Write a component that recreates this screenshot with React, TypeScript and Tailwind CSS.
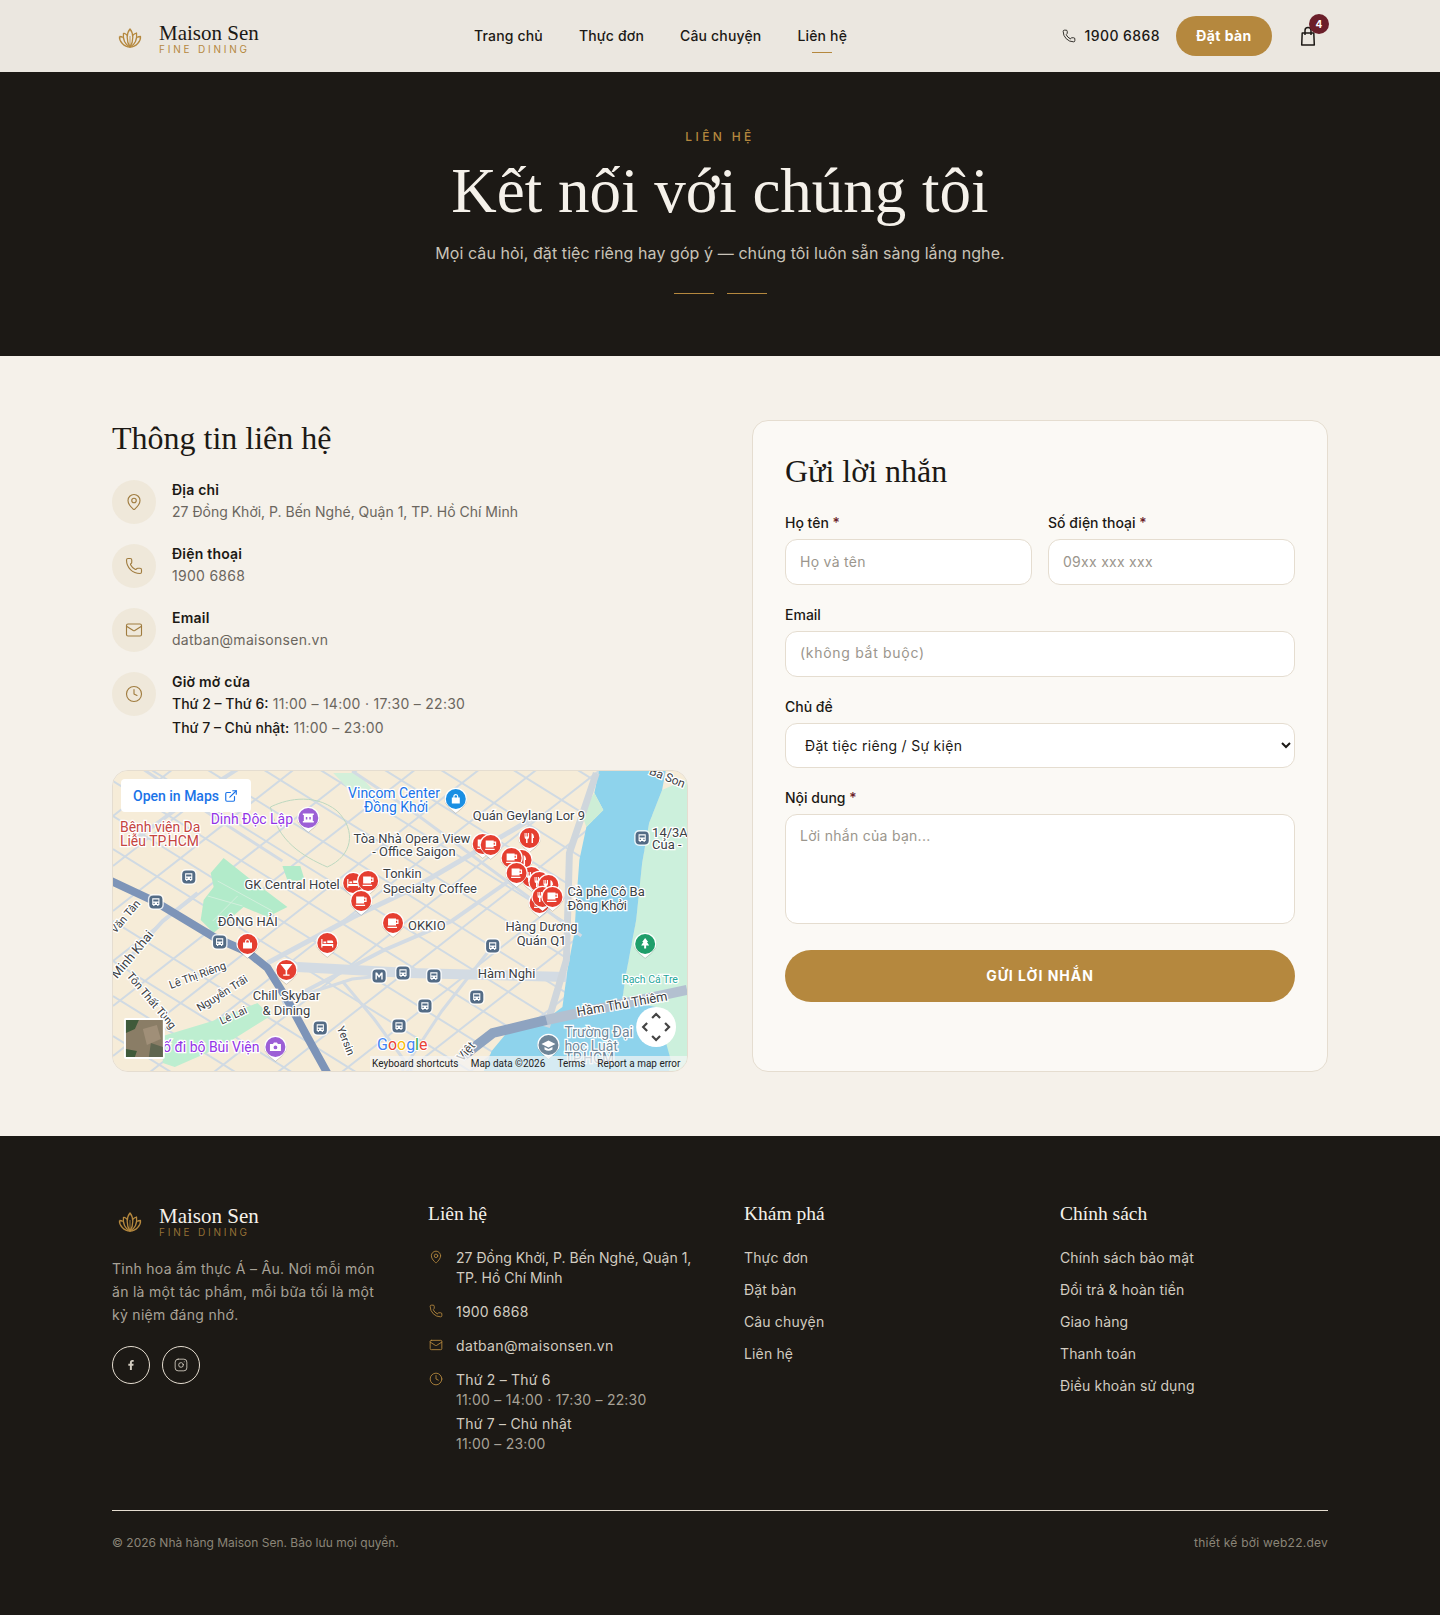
import { Clock, ExternalLink, Instagram, Mail, MapPin, Phone } from "lucide-react"
import { FaFacebookF } from "react-icons/fa"

const SANS = "font-['Inter',sans-serif]"
const SERIF = "font-['Liberation_Serif',serif]"

function Lotus({ className }: { className?: string }) {
  return (
    <svg viewBox="0 0 24 20" fill="none" stroke="#b5883e" strokeWidth="1.3" strokeLinejoin="round" className={className}>
      <path d="M12 1C8.5 5 8 13 12 19C16 13 15.5 5 12 1Z" />
      <path d="M5.5 5C4.5 11 7 17 12 19C17 17 19.5 11 18.5 5C16.8 5.6 15.6 6.4 14.7 7.4M5.5 5C7.2 5.6 8.4 6.4 9.3 7.4" />
      <path d="M1.5 8.5C1 13 6 19 12 19C18 19 23 13 22.5 8.5C21 8.6 20 8.9 19.2 9.3M1.5 8.5C3 8.6 4 8.9 4.8 9.3" />
      <path d="M12 8V19" strokeWidth="0.8" />
    </svg>
  )
}

function Logo({ dark }: { dark?: boolean }) {
  return (
    <div className="flex items-center gap-[11px]">
      <div className="w-9 flex justify-center">
        <Lotus className="w-6 h-5 mt-1" />
      </div>
      <div className="flex flex-col pt-1">
        <span className={`${SERIF} text-[21px] leading-6 ${dark ? "text-[#f5f1ea]" : "text-[#1c1915]"}`}>Maison Sen</span>
        <span className={`text-[10px] leading-[14px] -mt-[3px] tracking-[0.28em] ${dark ? "text-[#b5883e]/80" : "text-[#b5883e]"}`}>FINE DINING</span>
      </div>
    </div>
  )
}

const NAV = ["Trang chủ", "Thực đơn", "Câu chuyện", "Liên hệ"]

function Header() {
  return (
    <header className="bg-[#ebe7e0] h-[72px] flex items-center justify-between px-[112px] relative">
      <Logo />
      <nav className="flex items-center gap-9 absolute left-[474px] top-0 h-[72px]">
        {NAV.map((n, i) => (
          <a key={n} className="relative text-sm font-medium text-[#1c1915] tracking-[0.012em]">
            {n}
            {i === 3 && <span className="absolute left-1/2 -translate-x-1/2 top-[26px] w-5 h-px bg-[#b5883e]" />}
          </a>
        ))}
      </nav>
      <div className="flex items-center">
        <Phone className="w-[14px] h-[14px] text-[#1c1915] mr-[9px]" strokeWidth={1.5} />
        <span className="text-sm font-medium text-[#1c1915] tracking-[0.03em] mr-4">1900 6868</span>
        <button className="h-10 w-[96px] rounded-full bg-[#b5883e] text-white text-sm font-bold tracking-[0.03em] mr-4">Đặt bàn</button>
        <button className="relative w-10 h-10 flex items-center justify-center text-[#1c1915]">
          <svg viewBox="0 0 20 20" className="w-5 h-5" fill="none" stroke="currentColor" strokeWidth="1.5" strokeLinejoin="round">
            <path d="M4.2 7H15.8L16.3 19H3.7Z" />
            <path d="M7 9V4.5a3 3 0 0 1 6 0V9" />
          </svg>
          <span className="absolute -top-[2px] -right-px w-5 h-5 rounded-full bg-[#6b1f2a] text-white text-[10px] font-bold flex items-center justify-center">4</span>
        </button>
      </div>
    </header>
  )
}

function Hero() {
  return (
    <section className="bg-[#1c1915] h-[284px] flex flex-col items-center pt-[57px]">
      <div className="text-xs font-medium leading-4 tracking-[0.28em] text-[#b5883e]">LIÊN HỆ</div>
      <h1 className={`${SERIF} text-[63px] leading-[72px] mt-[10px] text-[#f5f1ea]`}>Kết nối với chúng tôi</h1>
      <p className="text-base leading-6 mt-[14px] text-[#c9c3b8] tracking-[0.005em]">Mọi câu hỏi, đặt tiệc riêng hay góp ý — chúng tôi luôn sẵn sàng lắng nghe.</p>
      <div className="flex gap-[13px] mt-[28px]">
        <span className="w-10 h-px bg-[#b5883e]" />
        <span className="w-10 h-px bg-[#b5883e]" />
      </div>
    </section>
  )
}

function InfoRow({ icon, title, children }: { icon: React.ReactNode; title: string; children: React.ReactNode }) {
  return (
    <div className="flex gap-4">
      <div className="w-11 h-11 rounded-full bg-[#efe8da] text-[#a07c3f] flex items-center justify-center shrink-0">{icon}</div>
      <div className="text-sm leading-[22px] -mt-px">
        <div className="font-semibold tracking-[0.015em] text-[#1c1915]">{title}</div>
        {children}
      </div>
    </div>
  )
}

// -- map drawing -----------------------------------------------------------

const GRID_A = [-290, -250, -205, -170, -130, -95, -60, -25, 10, 45, 78, 150, 190, 225, 265]
const GRID_B = [45, 95, 140, 190, 235, 285, 330, 380, 430, 480, 530, 580, 625, 680, 730]

const MAIN_ROADS: [string, number][] = [
  ["M155 192L241 146L300 118L420 48", 5],
  ["M170 232L270 180L340 150L400 108", 4],
  ["M185 196L298 202L455 206", 10],
  ["M240 0L300 40L470 165", 3],
  ["M0 205L50 150L85 122", 4],
  ["M20 70L75 30L130 -5", 4],
  ["M30 -2L100 45L170 90", 3],
  ["M175 229L240 208L298 202", 3],
  ["M290 300L330 240L381 175", 3],
  ["M230 210L262 248L300 300", 3],
]

const STREET_LABELS: [string, number, number, number, number][] = [
  ["Lê Thị Riêng", 85, 205, -20, 11],
  ["Nguyễn Trãi", 110, 223, -32, 11],
  ["Lê Lai", 121, 245, -25, 11],
  ["Minh Khai", 20, 184, -50, 13],
  ["Tôn Thất Tùng", 38, 230, 50, 11],
  ["Văn Tân", 13, 146, -50, 11],
  ["Yersin", 233, 270, 68, 11],
  ["Ba Son", 556, 7, 22, 12],
  ["Hầm Thủ Thiêm", 511, 234, -10, 13],
  ["Việt", 355, 281, -50, 12],
]

const LABELS: [string, number, number, string, "start" | "middle" | "end", number?][] = [
  ["Vincom Center", 282, 27, "#1a73e8", "middle"],
  ["Đồng Khởi", 284, 41, "#1a73e8", "middle"],
  ["Dinh Độc Lập", 98, 53, "#9334e6", "start"],
  ["Bệnh viện Da", 7, 61, "#c5453f", "start"],
  ["Liễu TP.HCM", 7, 75, "#c5453f", "start"],
  ["Tòa Nhà Opera View", 300, 72, "#3c4043", "middle", 13],
  ["- Office Saigon", 302, 85, "#3c4043", "middle", 13],
  ["Quán Geylang Lor 9", 361, 49, "#3c4043", "start", 13],
  ["GK Central Hotel", 132, 118, "#3c4043", "start", 13],
  ["Tonkin", 271, 107, "#3c4043", "start", 13],
  ["Specialty Coffee", 271, 122, "#3c4043", "start", 13],
  ["Cà phê Cô Ba", 456, 125, "#3c4043", "start", 13],
  ["Đồng Khởi", 456, 139, "#3c4043", "start", 13],
  ["OKKIO", 296, 159, "#3c4043", "start", 13],
  ["ĐÔNG HẢI", 105, 155, "#3c4043", "start", 13],
  ["Hàng Dương", 430, 160, "#3c4043", "middle", 13],
  ["Quán Q1", 430, 174, "#3c4043", "middle", 13],
  ["Hàm Nghi", 366, 207, "#3c4043", "start", 13],
  ["Chill Skybar", 174, 229, "#3c4043", "middle", 13],
  ["& Dining", 174, 244, "#3c4043", "middle", 13],
  ["Phố đi bộ Bùi Viện", 147, 281, "#9334e6", "end"],
  ["14/3A", 541, 66, "#3c4043", "start", 13],
  ["Của -", 541, 78, "#3c4043", "start", 13],
  ["Rạch Cá Tre", 511, 212, "#26a69a", "start", 10.5],
  ["Trường Đại", 453, 266, "#70889a", "start"],
  ["học Luật", 453, 280, "#70889a", "start"],
  ["TP.HCM", 453, 292, "#70889a", "start"],
]

type Glyph = "cup" | "fork" | "bed" | "bag" | "glass" | "lock" | "tree" | "bank" | "camera" | "cap"

function PinGlyph({ g }: { g: Glyph }) {
  if (g === "cup") return <path d="M-5 -4.5H3V-3.5H5.5V1H3V2.5H-5ZM3 -2.2V-.3H4.2V-2.2ZM-5.5 3.7H4V5H-5.5Z" fill="#fff" fillRule="evenodd" />
  if (g === "fork") return <path d="M-5 -5V-1Q-5 1 -3.5 1V5H-2V1Q-.5 1 -.5 -1V-5H-1.5V-1.5H-2.3V-5H-3.2V-1.5H-4V-5ZM2 -5Q4.5 -4 4.5 0H3.5V5H2Z" fill="#fff" />
  if (g === "bed") return <path d="M-6 -4H-4.8V1H6V4.5H4.8V3H-4.8V4.5H-6ZM-3.8 -1.5H-1V.2H-3.8ZM0 -2.5H5Q6 -2.5 6 0H0Z" fill="#fff" />
  if (g === "bag") return <path d="M-4.5 -1.5H-2.5V-2.5Q-2.5 -5 0 -5Q2.5 -5 2.5 -2.5V-1.5H4.5V4.5H-4.5ZM-1.3 -1.5H1.3V-2.5Q1.3 -3.8 0 -3.8Q-1.3 -3.8 -1.3 -2.5Z" fill="#fff" />
  if (g === "glass") return <path d="M-6 -6H6L.8 .5V4.4H3.2V5.8H-3.2V4.4H-.8V.5Z" fill="#fff" />
  if (g === "lock") return <path d="M-4 -1.5H-2.5V-2.5Q-2.5 -5 0 -5Q2.5 -5 2.5 -2.5V-1.5H4V4.5H-4ZM-1.3 -1.5H1.3V-2.5Q1.3 -3.8 0 -3.8Q-1.3 -3.8 -1.3 -2.5Z" fill="#fff" />
  if (g === "tree") return <path d="M0 -6L3 -2H1.8L4 1.5H1V4.5H-1V1.5H-4L-1.8 -2H-3Z" fill="#fff" />
  if (g === "bank") return <path d="M-5.5 -4.5H5.5V-3H4.5V3H5.5V4.5H-5.5V3H-4.5V-3H-5.5ZM-2.5 -1V1.5H-1V-1ZM1 -1V1.5H2.5V-1Z" fill="#fff" fillRule="evenodd" />
  if (g === "camera") return <path d="M-5.5 -3H-2.5L-1.5 -4.5H1.5L2.5 -3H5.5V4H-5.5ZM0 -1.5A1.9 1.9 0 1 0 0 2.3A1.9 1.9 0 1 0 0 -1.5Z" fill="#fff" fillRule="evenodd" />
  return <path d="M0 -4.5L7 -1L0 2.5L-7 -1ZM-4 2L0 4L4 2V4.5Q0 7 -4 4.5Z" fill="#fff" />
}

function Pin({ x, y, g, color = "#e53e30" }: { x: number; y: number; g: Glyph; color?: string }) {
  return (
    <g transform={`translate(${x} ${y})`}>
      <path d="M-10.6 3.5A11.2 11.2 0 1 1 10.6 3.5Q7 9 0 14Q-7 9 -10.6 3.5Z" fill="#000" opacity="0.18" transform="translate(0 .8)" />
      <path d="M-10.6 3.5A11.2 11.2 0 1 1 10.6 3.5Q7 9 0 14Q-7 9 -10.6 3.5Z" fill="#fff" />
      <circle r="10" fill={color} />
      <PinGlyph g={g} />
    </g>
  )
}

function Bus({ x, y, metro }: { x: number; y: number; metro?: boolean }) {
  return (
    <g transform={`translate(${x} ${y})`}>
      <rect x="-8" y="-8" width="16" height="16" rx="5" fill="#fff" opacity="0.8" />
      <rect x="-6.6" y="-6.6" width="13.2" height="13.2" rx="4" fill="#536b85" />
      {metro ? (
        <path d="M-3.6 3.6V-3.6H-2L0 -.4L2 -3.6H3.6V3.6H2.2V-1L0 2L-2.2 -1V3.6Z" fill="#fff" />
      ) : (
        <path d="M-3.6 -3.8H3.6V3H2.6V4H1.4V3H-1.4V4H-2.6V3H-3.6ZM-2.6 -2.6V-.4H2.6V-2.6ZM-2.4 .8V1.9H-1.2V.8ZM1.2 .8V1.9H2.4V.8Z" fill="#fff" fillRule="evenodd" />
      )}
    </g>
  )
}

const PINS: [number, number, Glyph, string?][] = [
  [196, 47, "bank", "#9c5fd6"],
  [344, 28, "lock", "#1a8fe3"],
  [163, 276, "camera", "#9c5fd6"],
  [534, 173, "tree", "#1e9e6a"],
  [437, 274, "cap", "#6f8598"],
  [241, 112, "bed"],
  [256, 110, "cup"],
  [249, 130, "cup"],
  [281, 152, "cup"],
  [215, 172, "bed"],
  [135, 173, "bag"],
  [174, 199, "glass"],
  [418, 67, "fork"],
  [371, 73, "cup"],
  [379, 74, "cup"],
  [410, 89, "fork"],
  [400, 87, "cup"],
  [420, 106, "fork"],
  [405, 102, "cup"],
  [428, 111, "fork"],
  [437, 114, "fork"],
  [428, 132, "cup"],
  [431, 126, "fork"],
  [441, 126, "cup"],
]

const BUSES: [number, number, boolean?][] = [
  [76, 106], [43, 131], [107, 171], [208, 257], [267, 205, true], [291, 202], [287, 255],
  [381, 175], [322, 205], [365, 226], [313, 235], [531, 67],
]

function MapDrawing() {
  return (
    <svg viewBox="0 0 576 300" preserveAspectRatio="none" className="block w-full h-full" fontFamily="Roboto, sans-serif">
      <rect width="576" height="300" fill="#f6ecd8" />
      <g stroke="#d0dae3" strokeWidth="2">
        {GRID_A.map((c) => <line key={c} x1={0} y1={c} x2={576} y2={c + 357} />)}
        {GRID_B.map((c) => <line key={c} x1={0} y1={c} x2={576} y2={c - 449} />)}
      </g>
      {/* parks */}
      <path d="M111 87L135 106L175 136L155 146L131 136L101 162L88 149L91 129L101 116L98 102Z" fill="#b2ebca" />
      <path d="M170 95L188 95L192 108L176 112Z" fill="#b2ebca" />
      <path d="M50 292L50 265L100 250L145 232L158 245L110 275L62 296Z" fill="#bdeed0" />
      <path d="M221 2L245 2L262 20L240 22Z" fill="#d3f0da" />
      <path d="M158 36C170 30 200 20 225 40C245 60 240 85 215 96C190 85 165 70 158 36Z" fill="none" stroke="#bdd8c0" strokeWidth="1" />
      <path d="M95 125L130 135M105 110L160 140M100 150L125 125" stroke="#d2efdc" strokeWidth="1" />
      {/* east bank and river */}
      <path d="M551 19L576 8V300H558L545 236L511 229L515 202L525 149L531 92L538 52Z" fill="#ccf0dc" />
      <path d="M488 -2L555 -2L551 19L538 52L531 92L525 149L515 202L511 229L545 236L560 290L558 300H372L380 280L395 262L435 248L451 236L456 199L463 162L465 129L468 89L475 56L492 39L483 22Z" fill="#8ed3ec" />
      <path d="M483 22L492 39L475 56L470 42Z" fill="#cdeed6" />
      {MAIN_ROADS.map(([d, w]) => (
        <path key={d} d={d} fill="none" stroke="#d3dbe3" strokeWidth={w} />
      ))}
      <path d="M485 2L458 82L455 189L435 256" fill="none" stroke="#cfd6dc" strokeWidth="7" />
      <path d="M435 249L576 219" fill="none" stroke="#b3c0d0" strokeWidth="10" />
      <path d="M350 286L381 262L435 249" fill="none" stroke="#8ea3c0" strokeWidth="10" />
      <path d="M-2 110L43 131L101 166L135 181L155 197L175 229L195 266L215 302" fill="none" stroke="#7d94b8" strokeWidth="8" />
      {/* street names */}
      <g fill="#3c4043" stroke="#fff" strokeWidth="2.5" paintOrder="stroke" textAnchor="middle">
        {STREET_LABELS.map(([t, x, y, r, s]) => (
          <text key={t} x={x} y={y} fontSize={s} transform={`rotate(${r} ${x} ${y})`} dominantBaseline="middle">{t}</text>
        ))}
      </g>
      {BUSES.map(([x, y, m]) => <Bus key={`${x}-${y}`} x={x} y={y} metro={m} />)}
      {PINS.map(([x, y, g, c]) => <Pin key={`${x}-${y}`} x={x} y={y} g={g} color={c} />)}
      {/* place names */}
      <g stroke="#fff" strokeWidth="2.5" paintOrder="stroke" fontSize="14">
        {LABELS.map(([t, x, y, c, a, s]) => (
          <text key={`${t}${x}`} x={x} y={y} fill={c} textAnchor={a} fontSize={s}>{t}</text>
        ))}
      </g>
      {/* satellite thumbnail */}
      <rect x="11" y="247" width="41" height="41" rx="2" fill="#fff" />
      <rect x="13" y="249" width="37" height="37" fill="#8a7d66" />
      <path d="M13 249H26L22 258L13 262ZM13 278L24 280L22 286H13Z" fill="#3f5a3a" />
      <path d="M30 258L44 254L48 268L34 274Z" fill="#a08f78" />
      <path d="M38 272L50 276V286H36Z" fill="#5f6650" />
      {/* google + attribution */}
      <text x="265" y="279" fontSize="16" stroke="#fff" strokeWidth="2" paintOrder="stroke">
        <tspan fill="#4285f4">G</tspan><tspan fill="#ea4335">o</tspan><tspan fill="#fbbc05">o</tspan><tspan fill="#4285f4">g</tspan><tspan fill="#34a853">l</tspan><tspan fill="#ea4335">e</tspan>
      </text>
      <rect x="258" y="285" width="318" height="15" fill="#f5f5f5" opacity="0.7" />
      <g fontSize="10" fill="#222">
        <text x="260" y="296">Keyboard shortcuts</text>
        <text x="359" y="296">Map data ©2026</text>
        <text x="446" y="296">Terms</text>
        <text x="486" y="296">Report a map error</text>
      </g>
      {/* camera control */}
      <circle cx="545" cy="256" r="20" fill="#fff" />
      <path d="M541 247L545 243L549 247M541 265L545 269L549 265M536 252L532 256L536 260M554 252L558 256L554 260" fill="none" stroke="#444" strokeWidth="2.2" />
    </svg>
  )
}

function MapCard() {
  return (
    <div className="relative mt-[31px] h-[302px] rounded-2xl overflow-hidden border border-[#e5ddd0]">
      <MapDrawing />
      <div className="absolute left-2 top-2 w-[130px] h-[33px] bg-white rounded-sm flex items-center gap-[5px] pl-3 font-['Roboto',sans-serif] text-sm font-medium text-[#1a73e8]">
        Open in Maps
        <ExternalLink className="w-[14px] h-[14px]" />
      </div>
    </div>
  )
}

function ContactInfo() {
  const ic = "w-[18px] h-[18px]"
  const val = "text-[#6b665e] tracking-[0.02em]"
  const day = "font-medium text-[#1c1915] tracking-normal"
  return (
    <div>
      <h2 className={`${SERIF} text-[32px] leading-9 text-[#1c1915] mb-6`}>Thông tin liên hệ</h2>
      <div className="flex flex-col gap-5">
        <InfoRow icon={<MapPin className={ic} strokeWidth={1.5} />} title="Địa chỉ">
          <div className="text-[#6b665e]">27 Đồng Khởi, P. Bến Nghé, Quận 1, TP. Hồ Chí Minh</div>
        </InfoRow>
        <InfoRow icon={<Phone className={ic} strokeWidth={1.5} />} title="Điện thoại">
          <div className={val}>1900 6868</div>
        </InfoRow>
        <InfoRow icon={<Mail className={ic} strokeWidth={1.5} />} title="Email">
          <div className={val}>datban@maisonsen.vn</div>
        </InfoRow>
        <InfoRow icon={<Clock className={ic} strokeWidth={1.5} />} title="Giờ mở cửa">
          <div className={val}><span className={day}>Thứ 2 – Thứ 6:</span> 11:00 – 14:00 · 17:30 – 22:30</div>
          <div className={`${val} mt-[2px]`}><span className={day}>Thứ 7 – Chủ nhật:</span> 11:00 – 23:00</div>
        </InfoRow>
      </div>
      <MapCard />
    </div>
  )
}

const FIELD = "w-full bg-white border border-[#e5ddd0] rounded-xl text-sm text-[#1c1915] placeholder:text-[#9b968d] outline-none tracking-[0.02em]"

function Label({ text, required }: { text: string; required?: boolean }) {
  return (
    <label className="block text-sm font-medium leading-5 text-[#1c1915] mb-[6px]">
      {text}
      {required && <span className="text-[#6b1f2a]"> *</span>}
    </label>
  )
}

function ContactForm() {
  return (
    <div className="bg-[#fbf9f5] border border-[#e5ddd0] rounded-2xl p-8 h-[652px]">
      <h2 className={`${SERIF} text-[32px] leading-9 text-[#1c1915] mb-6`}>Gửi lời nhắn</h2>
      <div className="grid grid-cols-2 gap-4">
        <div>
          <Label text="Họ tên" required />
          <input className={`${FIELD} h-[46px] px-[14px] pb-[2px]`} placeholder="Họ và tên" />
        </div>
        <div>
          <Label text="Số điện thoại" required />
          <input className={`${FIELD} h-[46px] px-[14px] pb-[2px]`} placeholder="09xx xxx xxx" />
        </div>
      </div>
      <div className="mt-5">
        <Label text="Email" />
        <input className={`${FIELD} h-[46px] px-[14px] pb-[3px] placeholder:tracking-[0.05em]`} placeholder="(không bắt buộc)" />
      </div>
      <div className="mt-5">
        <Label text="Chủ đề" />
        <select className={`${FIELD} h-[45px] px-[15px]`} defaultValue="tiec">
          <option value="tiec">Đặt tiệc riêng / Sự kiện</option>
        </select>
      </div>
      <div className="mt-5">
        <Label text="Nội dung" required />
        <textarea className={`${FIELD} block h-[110px] px-[14px] py-[11px] resize-none`} placeholder="Lời nhắn của bạn..." />
      </div>
      <button className="w-full h-[52px] mt-[26px] rounded-full bg-[#b5883e] text-white text-sm font-bold tracking-[0.07em]">GỬI LỜI NHẮN</button>
    </div>
  )
}

function FooterTitle({ children }: { children: React.ReactNode }) {
  return <h4 className={`${SERIF} text-[19.5px] leading-7 text-[#f5f1ea] mb-5`}>{children}</h4>
}

const EXPLORE = ["Thực đơn", "Đặt bàn", "Câu chuyện", "Liên hệ"]
const POLICY = ["Chính sách bảo mật", "Đổi trả & hoàn tiền", "Giao hàng", "Thanh toán", "Điều khoản sử dụng"]

function LinkCol({ title, links }: { title: string; links: string[] }) {
  return (
    <div>
      <FooterTitle>{title}</FooterTitle>
      <ul className="flex flex-col gap-3 text-sm leading-5 tracking-[0.01em] text-[#d2ccc0]">
        {links.map((l) => <li key={l}>{l}</li>)}
      </ul>
    </div>
  )
}

function Footer() {
  const ic = "w-[14px] h-[14px] text-[#b5883e] mt-[2px] ml-px shrink-0"
  return (
    <footer className="bg-[#1c1915] h-[479px] pt-16 px-[112px]">
      <div className="grid grid-cols-4 gap-12 h-[310px]">
        <div>
          <Logo dark />
          <p className="mt-[19px] text-sm leading-[22.75px] tracking-[0.02em] text-[#a8a297]">Tinh hoa ẩm thực Á – Âu. Nơi mỗi món ăn là một tác phẩm, mỗi bữa tối là một kỷ niệm đáng nhớ.</p>
          <div className="flex gap-3 mt-5">
            <a className="w-[38px] h-[38px] rounded-full border border-[#e5ddd0] flex items-center justify-center text-[#d2ccc0]"><FaFacebookF className="w-[10px] h-[10px]" /></a>
            <a className="w-[38px] h-[38px] rounded-full border border-[#e5ddd0] flex items-center justify-center text-[#d2ccc0]"><Instagram className="w-[14px] h-[14px]" strokeWidth={1.5} /></a>
          </div>
        </div>
        <div>
          <FooterTitle>Liên hệ</FooterTitle>
          <ul className="flex flex-col gap-[14px] text-sm leading-5 tracking-[0.015em] text-[#d2ccc0]">
            <li className="flex gap-[13px]"><MapPin className={ic} strokeWidth={1.5} /><span className="tracking-normal">27 Đồng Khởi, P. Bến Nghé, Quận 1, TP. Hồ Chí Minh</span></li>
            <li className="flex gap-[13px]"><Phone className={ic} strokeWidth={1.5} /><span>1900 6868</span></li>
            <li className="flex gap-[13px]"><Mail className={ic} strokeWidth={1.5} /><span className="tracking-[0.025em]">datban@maisonsen.vn</span></li>
            <li className="flex gap-[13px]">
              <Clock className={ic} strokeWidth={1.5} />
              <div className="flex flex-col gap-1">
                <div>Thứ 2 – Thứ 6<div className="text-[#a8a297]">11:00 – 14:00 · 17:30 – 22:30</div></div>
                <div>Thứ 7 – Chủ nhật<div className="text-[#a8a297]">11:00 – 23:00</div></div>
              </div>
            </li>
          </ul>
        </div>
        <LinkCol title="Khám phá" links={EXPLORE} />
        <LinkCol title="Chính sách" links={POLICY} />
      </div>
      <div className="border-t border-[#e5ddd0] pt-6 flex justify-between text-xs leading-4 text-[#8b8578]">
        <span>© 2026 Nhà hàng Maison Sen. Bảo lưu mọi quyền.</span>
        <span className="tracking-[0.02em]">thiết kế bởi web22.dev</span>
      </div>
    </footer>
  )
}

export default function App() {
  return (
    <div className={`${SANS} bg-[#f5f1ea] w-full`}>
      <Header />
      <Hero />
      <main className="py-16 px-[112px] grid grid-cols-2 gap-16">
        <ContactInfo />
        <ContactForm />
      </main>
      <Footer />
    </div>
  )
}
